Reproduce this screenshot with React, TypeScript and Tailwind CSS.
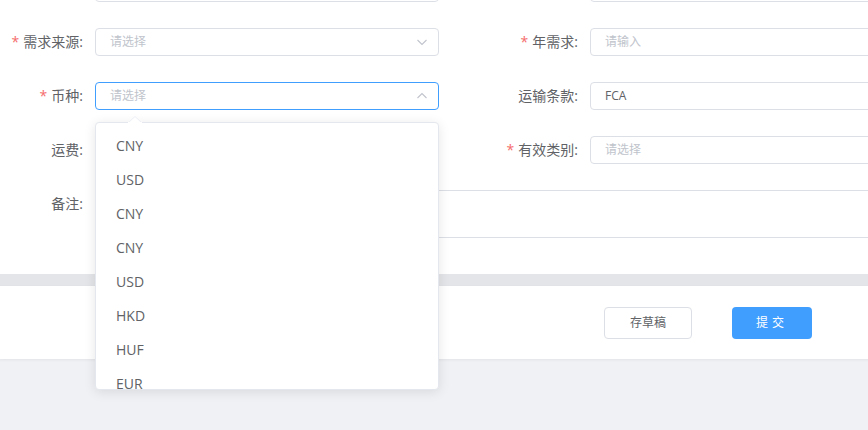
import React from "react";

const font = { fontFamily: '"Open Sans", "Noto Sans CJK SC", sans-serif' };

function Chevron({ up }: { up?: boolean }) {
  return (
    <svg width="12" height="12" viewBox="0 0 12 12" className="shrink-0">
      <polyline
        points={up ? "1.5,8 6,3.5 10.5,8" : "1.5,4 6,8.5 10.5,4"}
        fill="none"
        stroke="#c0c4cc"
        strokeWidth="1.1"
      />
    </svg>
  );
}

function Label({ text, req }: { text?: string; req?: boolean }) {
  return (
    <div className="w-[96px] shrink-0 pr-3 text-right text-[14px] leading-[28px] text-[#606266]">
      {req && <span className="mr-1 text-[#f56c6c]">*</span>}
      {text ? `${text}:` : ""}
    </div>
  );
}

function Input({
  placeholder,
  value,
  select,
  focused,
  children,
}: {
  placeholder?: string;
  value?: string;
  select?: boolean;
  focused?: boolean;
  children?: React.ReactNode;
}) {
  return (
    <div className="relative flex-1">
      <div
        className={
          "flex h-[28px] items-center rounded-[4px] border bg-white pl-[14px] pr-[10px] text-[12px] " +
          (focused ? "border-[#409eff]" : "border-[#dcdfe6]")
        }
      >
        <span className={"flex-1 " + (value ? "text-[#606266]" : "text-[#c0c4cc]")}>
          {value ?? placeholder}
        </span>
        {select && <Chevron up={focused} />}
      </div>
      {children}
    </div>
  );
}

function Row({ children }: { children: React.ReactNode }) {
  return <div className="flex items-center">{children}</div>;
}

const options = ["CNY", "USD", "CNY", "CNY", "USD", "HKD", "HUF", "EUR"];

export default function App() {
  return (
    <div style={font} className="h-[430px] w-[868px] overflow-hidden bg-[#f0f1f4]">
      <div className="ml-[-1px] w-[1000px]">
        <div className="mt-[-40px] bg-white pb-[36px] pt-[14px]">
          <div className="grid grid-cols-[440px_440px] gap-x-[55px] gap-y-[26px]">
            <Row>
              <Label />
              <Input />
            </Row>
            <Row>
              <Label />
              <Input />
            </Row>
            <Row>
              <Label text="需求来源" req />
              <Input placeholder="请选择" select />
            </Row>
            <Row>
              <Label text="年需求" req />
              <Input placeholder="请输入" />
            </Row>
            <Row>
              <Label text="币种" req />
              <Input placeholder="请选择" select focused>
                <div className="absolute left-0 top-[40px] z-10 w-full">
                  <svg
                    width="14"
                    height="7"
                    viewBox="0 0 14 7"
                    className="absolute left-[33px] top-[-6px]"
                  >
                    <polygon points="0,7 7,0.5 14,7" fill="#ffffff" stroke="#ebeef5" strokeWidth="1" />
                    <rect x="0" y="6" width="14" height="2" fill="#ffffff" />
                  </svg>
                  <div className="h-[268px] overflow-hidden rounded-[4px] border border-[#e4e7ed] bg-white pt-[6px] shadow-[0_2px_12px_0_rgba(0,0,0,0.1)]">
                    {options.map((o, i) => (
                      <div
                        key={i}
                        className="h-[34px] px-5 text-[14px] leading-[34px] text-[#606266]"
                      >
                        {o}
                      </div>
                    ))}
                  </div>
                </div>
              </Input>
            </Row>
            <Row>
              <Label text="运输条款" />
              <Input value="FCA" />
            </Row>
            <Row>
              <Label text="运费" />
              <Input />
            </Row>
            <Row>
              <Label text="有效类别" req />
              <Input placeholder="请选择" select />
            </Row>
            <div className="col-span-2 flex items-start">
              <div className="w-[96px] shrink-0 pr-3 pt-[4px] text-right text-[14px] leading-[20px] text-[#606266]">
                备注:
              </div>
              <div className="h-[48px] flex-1 rounded-[4px] border border-[#dcdfe6] bg-white" />
            </div>
          </div>
        </div>
        <div className="h-[12px] bg-[#e4e5e8]" />
        <div className="flex h-[73px] items-center bg-white pl-[605px] shadow-[0_1px_3px_rgba(0,0,0,0.06)]">
          <button className="h-[32px] w-[88px] rounded-[4px] border border-[#dcdfe6] bg-white text-[12px] text-[#606266]">
            存草稿
          </button>
          <button className="ml-[40px] h-[32px] w-[80px] rounded-[4px] bg-[#409eff] text-[12px] tracking-[4px] text-white">
            提交
          </button>
        </div>
      </div>
    </div>
  );
}
